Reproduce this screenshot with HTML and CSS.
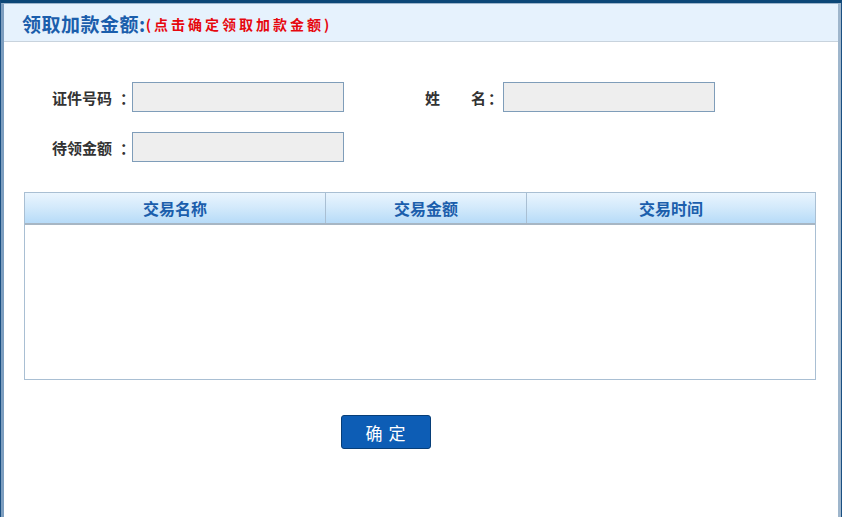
FILE: index.html
```html
<!DOCTYPE html>
<html lang="zh">
<head>
<meta charset="utf-8">
<link rel="stylesheet" href="styles.css">
</head>
<body>
<div class="frame">
  <div class="inner">
    <div class="header">
      <span class="title">领取加款金额:</span><span class="hint">(点击确定领取加款金额)</span>
    </div>
    <div class="content">
      <div class="form">
        <div class="row">
          <div class="field">
            <span class="label">证件号码<span class="colon">：</span></span><span class="input"></span>
          </div>
          <div class="field field-name">
            <span class="label label-name"><span>姓</span><span>名<span class="colon">：</span></span></span><span class="input"></span>
          </div>
        </div>
        <div class="row">
          <div class="field">
            <span class="label">待领金额<span class="colon">：</span></span><span class="input"></span>
          </div>
        </div>
      </div>
      <div class="table">
        <div class="thead">
          <div class="th c1">交易名称</div>
          <div class="th c2">交易金额</div>
          <div class="th c3">交易时间</div>
        </div>
        <div class="tbody"></div>
      </div>
      <div class="actions">
        <button class="btn">确 定</button>
      </div>
    </div>
  </div>
</div>
</body>
</html>
```

FILE: styles.css
```css
html, body {
  margin: 0;
  padding: 0;
  background: #ffffff;
}
body {
  font-family: "Noto Sans CJK SC", "Liberation Sans", sans-serif;
  width: 842px;
  height: 517px;
  overflow: hidden;
}
.frame {
  box-sizing: border-box;
  width: 842px;
  height: 517px;
  border-top: 3px solid #0c4777;
  border-left: 1px solid #1a4f82;
  border-right: 1px solid #1a4f82;
}
.inner {
  box-sizing: border-box;
  height: 100%;
  border-top: 1px solid #9db5cc;
  border-left: 3px solid #7d9ebf;
  border-right: 3px solid #9fb6cc;
}
.header {
  box-sizing: border-box;
  height: 38px;
  background: #e6f2fd;
  border-bottom: 1px solid #c8d3dd;
  display: flex;
  align-items: center;
  padding-left: 18px;
  padding-top: 1px;
}
.title {
  color: #1b5eac;
  font-size: 19px;
  font-weight: bold;
  letter-spacing: 0.5px;
}
.hint {
  color: #e6080f;
  font-size: 14px;
  font-weight: bold;
  letter-spacing: 3px;
  padding-top: 2px;
}
.content {
  padding: 40px 20px 0 20px;
}
.form {
  display: flex;
  flex-direction: column;
  gap: 20px;
  padding-left: 28px;
}
.row {
  display: flex;
  align-items: center;
}
.field {
  display: flex;
  align-items: center;
}
.field-name {
  margin-left: 81px;
}
.label {
  font-size: 15px;
  font-weight: bold;
  color: #333333;
  width: 80px;
  white-space: nowrap;
}
.colon {
  display: inline-block;
  padding-left: 8px;
}
.label-name {
  width: 78px;
  display: flex;
  gap: 31px;
}
.label-name .colon {
  padding-left: 2px;
}
.input {
  box-sizing: border-box;
  display: block;
  width: 212px;
  height: 30px;
  background: #eeeeee;
  border: 1px solid #7f9db9;
}
.table {
  box-sizing: border-box;
  margin-top: 30px;
  width: 792px;
  height: 188px;
  border: 1px solid #a9bfd3;
  display: flex;
  flex-direction: column;
}
.thead {
  display: flex;
  height: 30px;
  border-bottom: 2px solid #a7b6c4;
  background: linear-gradient(to bottom, #eaf5fe 0%, #d2e9fb 50%, #b7dbf8 100%);
}
.th {
  box-sizing: border-box;
  display: flex;
  align-items: center;
  justify-content: center;
  color: #1b5eac;
  font-size: 16px;
  font-weight: bold;
  border-right: 1px solid #a9bfd3;
}
.c1 { width: 301px; }
.c2 { width: 201px; }
.c3 { flex: 1; border-right: none; }
.tbody {
  flex: 1;
}
.actions {
  display: flex;
  padding-left: 317px;
  margin-top: 35px;
}
.btn {
  box-sizing: border-box;
  width: 90px;
  height: 34px;
  background: #0d5db5;
  border: 1px solid #073e78;
  border-radius: 3px;
  color: #ffffff;
  font-family: "Noto Sans CJK SC", "Liberation Sans", sans-serif;
  font-size: 17px;
  letter-spacing: 1px;
  padding: 0;
}
```
